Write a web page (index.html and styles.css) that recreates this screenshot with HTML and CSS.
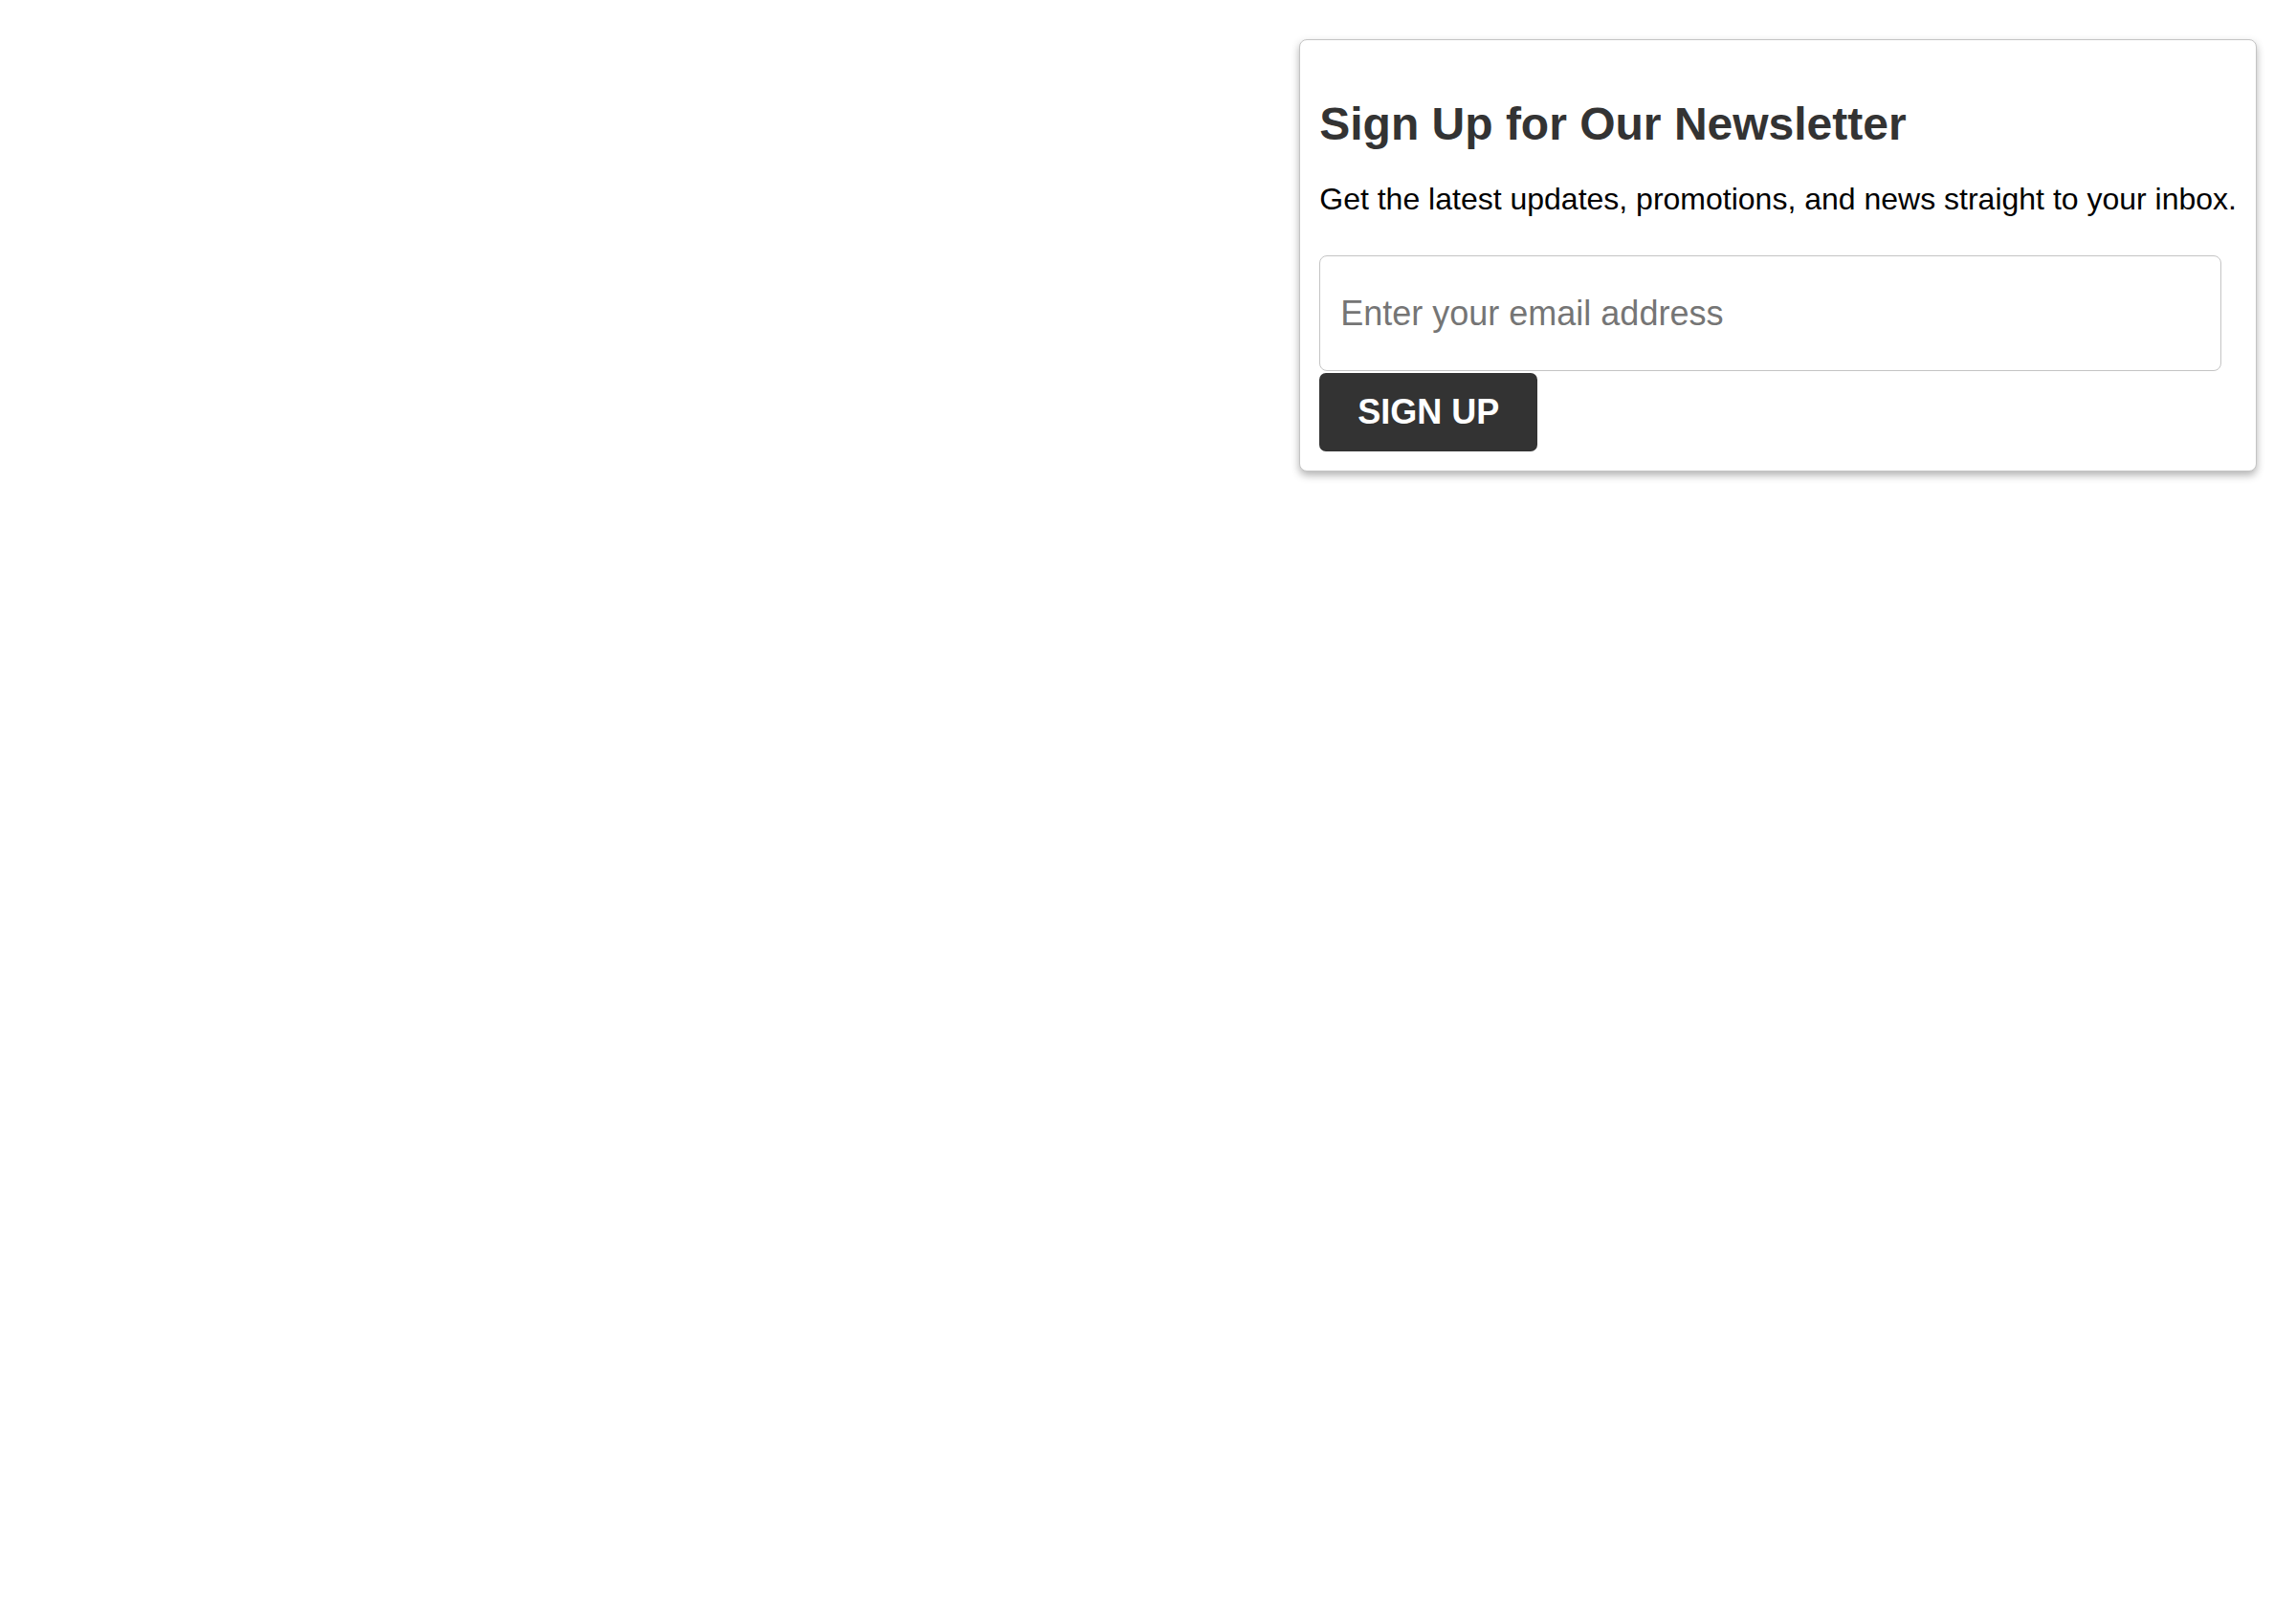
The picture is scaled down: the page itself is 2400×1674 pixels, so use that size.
FILE: index.html
```html
<!DOCTYPE html>
<html lang="en">
<head>
<meta charset="utf-8">
<title>Newsletter</title>
<link rel="stylesheet" href="styles.css">
</head>
<body>
<div class="page">
  <form class="newsletter" onsubmit="return false;">
    <h2 class="newsletter-title">Sign Up for Our Newsletter</h2>
    <p class="newsletter-text">Get the latest updates, promotions, and news straight to your inbox.</p>
    <input class="newsletter-input" type="email" placeholder="Enter your email address">
    <button class="newsletter-button" type="submit">SIGN UP</button>
  </form>
</div>
</body>
</html>
```

FILE: styles.css
```css
html, body {
  margin: 0;
  padding: 0;
  background: #ffffff;
}

body {
  font-family: "Liberation Sans", Arial, sans-serif;
}

.page {
  display: flex;
  justify-content: flex-end;
  align-items: flex-start;
  padding: 41px 41px;
}

.newsletter {
  display: flex;
  flex-direction: column;
  align-items: flex-start;
  background: #ffffff;
  border: 1px solid #c4c4c4;
  border-radius: 8px;
  box-shadow: 0 4px 9px rgba(0, 0, 0, 0.3);
  padding: 20px;
}

.newsletter-title {
  margin: 40px 0 0 0;
  font-size: 48px;
  font-weight: bold;
  line-height: 55px;
  color: #333333;
}

.newsletter-text {
  margin: 33px 0 40px 0;
  font-size: 32px;
  line-height: 37px;
  color: #000000;
}

.newsletter-input {
  box-sizing: border-box;
  width: calc(100% - 16px);
  height: 121px;
  margin: 0 0 2px 0;
  padding: 0 21px;
  border: 1px solid #c4c4c4;
  border-radius: 8px;
  font-family: "Liberation Sans", Arial, sans-serif;
  font-size: 36px;
  color: #000000;
  background: #ffffff;
  outline: none;
}

.newsletter-input::placeholder {
  color: #757575;
}

.newsletter-button {
  box-sizing: border-box;
  height: 82px;
  padding: 0 40px;
  border: none;
  border-radius: 7px;
  background: #333333;
  color: #ffffff;
  font-family: "Liberation Sans", Arial, sans-serif;
  font-size: 36px;
  font-weight: bold;
  cursor: pointer;
}
```
